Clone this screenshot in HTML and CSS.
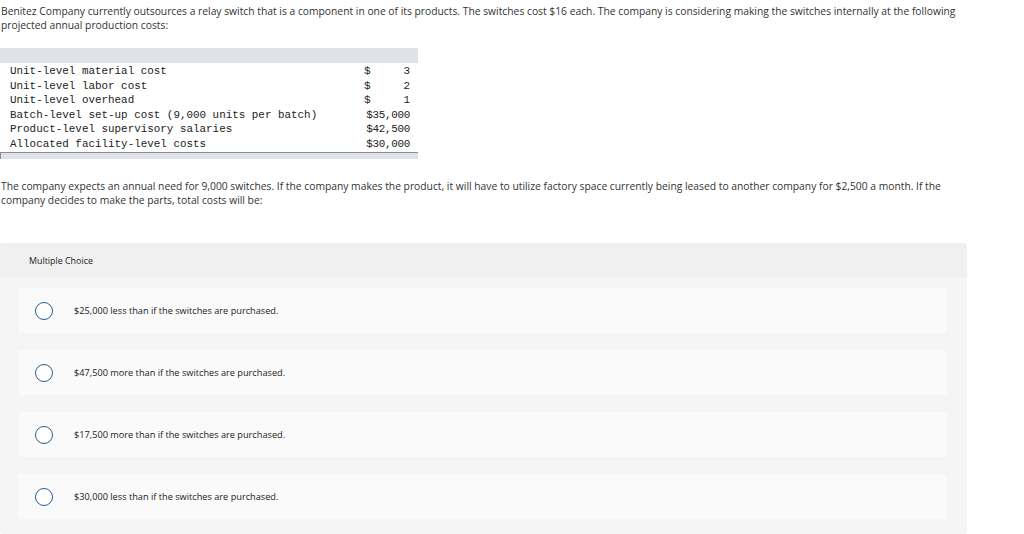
FILE: index.html
```html
<!DOCTYPE html>
<html>
<head>
<meta charset="utf-8">
<link rel="stylesheet" href="styles.css">
</head>
<body>
<p class="intro">Benitez Company currently outsources a relay switch that is a component in one of its products. The switches cost $16 each. The company is considering making the switches internally at the following projected annual production costs:</p>
<div class="cost-table">
  <div class="cost-head"></div>
  <div class="cost-row"><span class="label">Unit-level material cost</span><span class="val split"><span>$</span><span>3</span></span></div>
  <div class="cost-row"><span class="label">Unit-level labor cost</span><span class="val split"><span>$</span><span>2</span></span></div>
  <div class="cost-row"><span class="label">Unit-level overhead</span><span class="val split"><span>$</span><span>1</span></span></div>
  <div class="cost-row"><span class="label">Batch-level set-up cost (9,000 units per batch)</span><span class="val">$35,000</span></div>
  <div class="cost-row"><span class="label">Product-level supervisory salaries</span><span class="val">$42,500</span></div>
  <div class="cost-row"><span class="label">Allocated facility-level costs</span><span class="val">$30,000</span></div>
  <div class="cost-foot"></div>
</div>
<p class="intro second">The company expects an annual need for 9,000 switches. If the company makes the product, it will have to utilize factory space currently being leased to another company for $2,500 a month. If the company decides to make the parts, total costs will be:</p>
<div class="mc">
  <div class="mc-head">Multiple Choice</div>
  <div class="mc-body">
    <div class="option"><span class="radio"></span><span class="opt-text">$25,000 less than if the switches are purchased.</span></div>
    <div class="option"><span class="radio"></span><span class="opt-text">$47,500 more than if the switches are purchased.</span></div>
    <div class="option"><span class="radio"></span><span class="opt-text">$17,500 more than if the switches are purchased.</span></div>
    <div class="option"><span class="radio"></span><span class="opt-text">$30,000 less than if the switches are purchased.</span></div>
  </div>
</div>
</body>
</html>
```
FILE: styles.css
```css
html, body {
  margin: 0;
  padding: 0;
  background: #ffffff;
}
body {
  font-family: "Open Sans", "Liberation Sans", Arial, sans-serif;
  color: #333333;
  overflow: hidden;
}
.intro {
  margin: 4px 0 0 1px;
  font-size: 10.3px;
  line-height: 14px;
  width: 965px;
}
.cost-table {
  margin-top: 16px;
  width: 418px;
  font-family: "Liberation Mono", "Courier New", monospace;
  font-size: 10.9px;
  color: #222222;
}
.cost-head {
  height: 15px;
  background: #dfe2e8;
}
.cost-row {
  display: flex;
  align-items: center;
  height: 14.5px;
  padding: 2px 8px 0 10px;
  box-sizing: border-box;
  background: #ffffff;
}
.label {
  flex: 1;
  white-space: pre;
}
.val {
  width: 46px;
  text-align: right;
  letter-spacing: -0.3px;
}
.split {
  display: flex;
  justify-content: space-between;
  letter-spacing: 0;
}
.cost-foot {
  margin-top: 2px;
  height: 6px;
  background: #dfe2e8;
  border-top: 1px solid #8a8d92;
  border-left: 1px solid #8a8d92;
}
.second {
  margin-top: 20px;
}
.mc {
  margin-top: 36px;
  width: 967px;
  background: #f5f5f5;
  border-radius: 3px;
  overflow: hidden;
}
.mc-head {
  background: #f0f0f0;
  height: 34px;
  padding-left: 29px;
  display: flex;
  align-items: center;
  font-size: 8.9px;
  color: #222222;
}
.mc-body {
  display: flex;
  flex-direction: column;
  gap: 17px;
  padding: 11px 20px 15px 18px;
}
.option {
  height: 45px;
  background: #fafafa;
  border-radius: 3px;
  display: flex;
  align-items: center;
  padding-left: 17px;
}
.radio {
  width: 16px;
  height: 16px;
  border: 1.3px solid #2b5d8e;
  border-radius: 50%;
  background: #ffffff;
  flex-shrink: 0;
}
.opt-text {
  margin-left: 21px;
  font-size: 9.2px;
  color: #222222;
}
```
